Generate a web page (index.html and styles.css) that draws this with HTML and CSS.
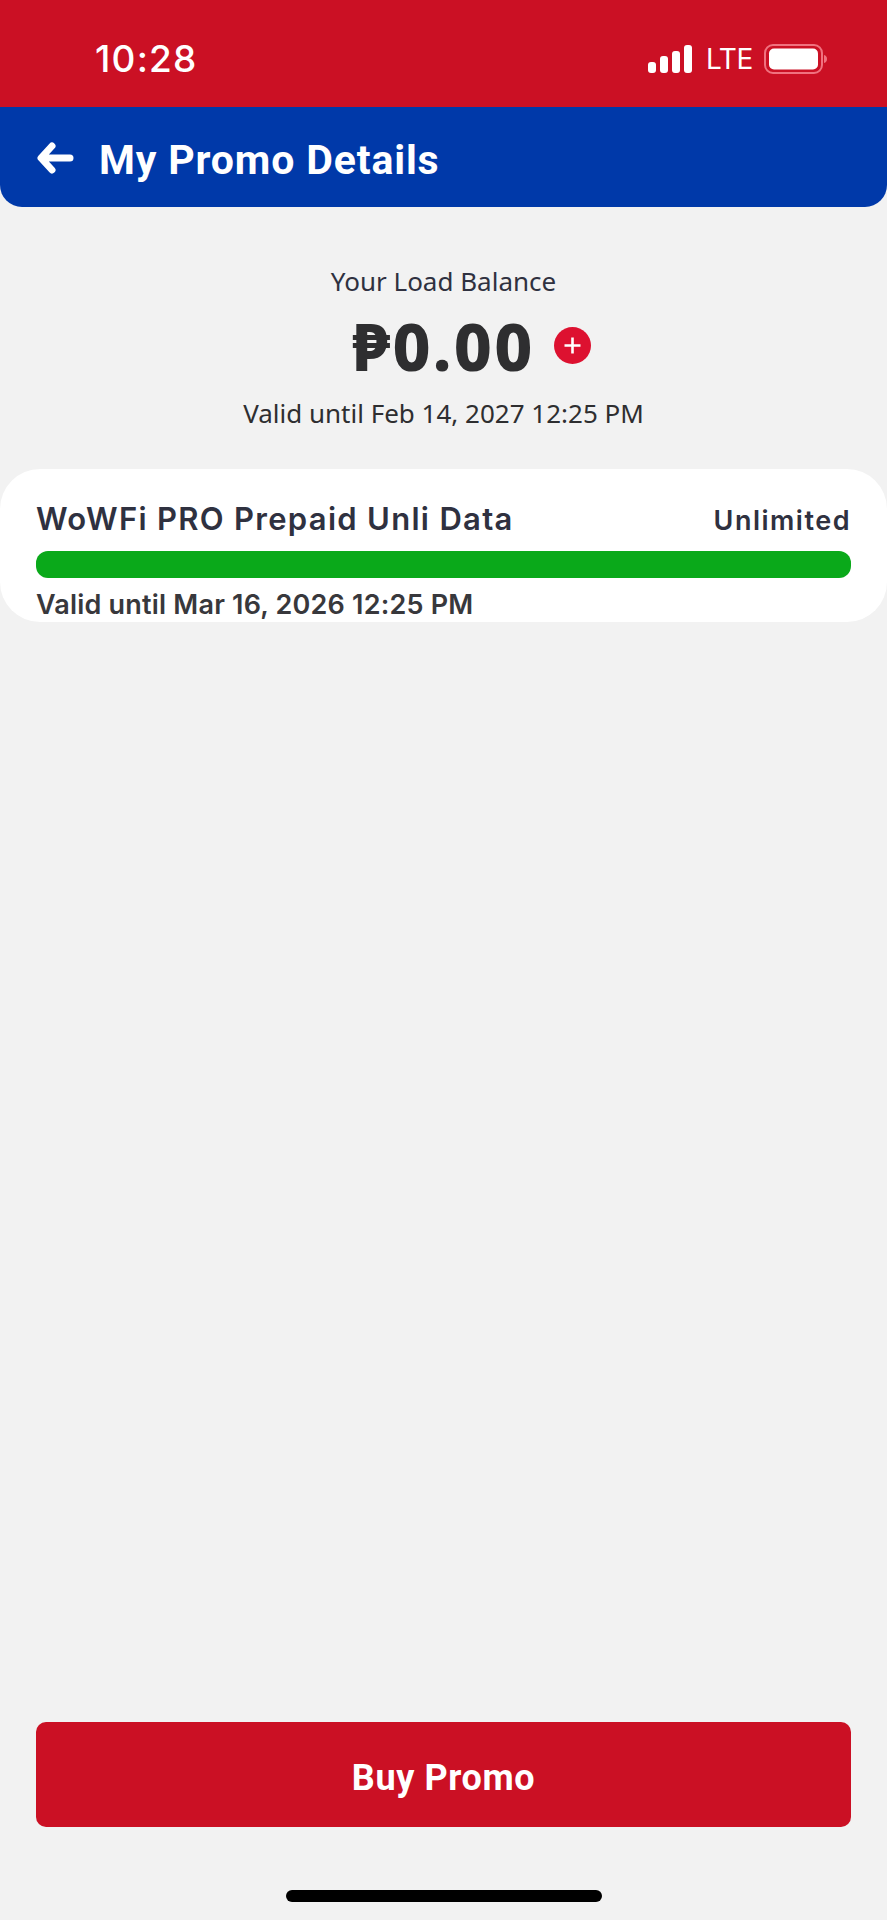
FILE: index.html
```html
<!DOCTYPE html>
<html lang="en">
<head>
<meta charset="utf-8">
<title>My Promo Details</title>
<link rel="stylesheet" href="styles.css">
</head>
<body>
<div class="screen">
  <div class="status">
    <span class="time">10:28</span>
    <div class="status-right">
      <svg class="signal" width="44" height="28" viewBox="0 0 44 28"><rect x="0" y="17" width="8" height="11" rx="3"/><rect x="12" y="11" width="8" height="17" rx="3"/><rect x="24" y="6" width="8" height="22" rx="3"/><rect x="36" y="0" width="8" height="28" rx="3"/></svg>
      <span class="lte">LTE</span>
      <svg class="battery" width="63" height="30" viewBox="0 0 63 30"><rect x="1" y="1" width="57" height="28" rx="8" fill="none" stroke="#f0727f" stroke-width="2"/><rect x="5" y="4.500" width="49" height="21" rx="5" fill="#fff"/><path d="M60 11c2 .6 3 2 3 4s-1 3.400-3 4z" fill="#f0727f"/></svg>
    </div>
  </div>
  <header class="appbar">
    <svg class="back" width="38" height="32" viewBox="0 0 38 32"><path d="M16 4 5 16l11 12M7 16h27" fill="none" stroke="#fff" stroke-width="7" stroke-linecap="round" stroke-linejoin="round"/></svg>
    <h1 class="title">My Promo Details</h1>
  </header>
  <section class="balance">
    <div class="balance-label">Your Load Balance</div>
    <div class="amount-row">
      <span class="amount">₱0.00</span>
      <svg class="plus" width="37" height="37" viewBox="0 0 37 37"><circle cx="18.500" cy="18.500" r="18.500" fill="#dd1130"/><path d="M18.500 10.500v16M10.500 18.500h16" stroke="#fff" stroke-width="2.600"/></svg>
    </div>
    <div class="balance-valid">Valid until Feb 14, 2027 12:25 PM</div>
  </section>
  <section class="card">
    <div class="card-head">
      <span class="promo-name">WoWFi PRO Prepaid Unli Data</span>
      <span class="promo-qty">Unlimited</span>
    </div>
    <div class="bar"></div>
    <div class="promo-valid">Valid until Mar 16, 2026 12:25 PM</div>
  </section>
  <button class="buy">Buy Promo</button>
  <div class="home"></div>
</div>
</body>
</html>
```
FILE: styles.css
```css
* { box-sizing: border-box; }
html, body { margin: 0; padding: 0; }
body { background: #f2f2f2; font-family: "Noto Sans", sans-serif; }
.screen { width: 887px; height: 1920px; display: flex; flex-direction: column; overflow: hidden; }

.status { height: 107px; background: #cb1024; color: #fff; display: flex; align-items: flex-start; justify-content: space-between; padding: 40px 60px 0 95px; }
.time { font-family: "Inter", sans-serif; font-size: 37px; font-weight: 500; line-height: 38px; letter-spacing: 1.200px; }
.status-right { display: flex; align-items: flex-start; padding-top: 4px; }
.signal { fill: #fff; margin-top: 1px; }
.lte { font-family: "Inter", sans-serif; font-size: 28px; line-height: 30px; margin-left: 14px; width: 58px; letter-spacing: -0.300px; }

.appbar { height: 100px; background: #0039a9; border-radius: 0 0 22px 22px; display: flex; align-items: center; padding: 6px 0 0 36px; gap: 25px; }
.back { flex: none; margin-bottom: 5px; }
.title { margin: 0; color: #fff; font-family: "Roboto", sans-serif; font-size: 41px; font-weight: 700; line-height: 50px; letter-spacing: 0.850px; }

.balance { display: flex; flex-direction: column; align-items: center; color: #2f3140; padding-top: 56px; }
.balance-label { font-size: 26px; line-height: 36px; }
.amount-row { display: flex; align-items: center; gap: 19px; margin-top: 8px; height: 76px; padding-left: 56px; }
.amount { font-size: 66px; font-weight: 800; color: #2e2e30; line-height: 76px; letter-spacing: 2.200px; }
.balance-valid { font-size: 26px; line-height: 36px; margin-top: 12px; color: #2e2e30; }

.card { margin-top: 38px; height: 153px; background: #fff; border-radius: 40px; padding: 30px 36px 0; overflow: hidden; font-family: "Inter", sans-serif; }
.card-head { display: flex; justify-content: space-between; align-items: baseline; color: #2f3140; }
.promo-name { font-size: 31px; font-weight: 600; line-height: 40px; letter-spacing: 1.300px; }
.promo-qty { font-size: 27px; font-weight: 600; line-height: 40px; letter-spacing: 1.500px; }
.bar { height: 27px; background: #0aa91a; border-radius: 12px; margin-top: 10px; }
.promo-valid { font-size: 27px; font-weight: 600; color: #38383c; line-height: 36px; margin-top: 9px; letter-spacing: 0.200px; }

.buy { margin: auto 36px 0; height: 105px; background: #cb1024; color: #fff; border: 0; border-radius: 10px; font-family: "Roboto", sans-serif; font-size: 36px; font-weight: 700; padding: 6px 0 0; letter-spacing: 0.600px; }
.home { width: 316px; height: 12px; background: #000; border-radius: 6px; margin: 63px auto 18px; }
```
